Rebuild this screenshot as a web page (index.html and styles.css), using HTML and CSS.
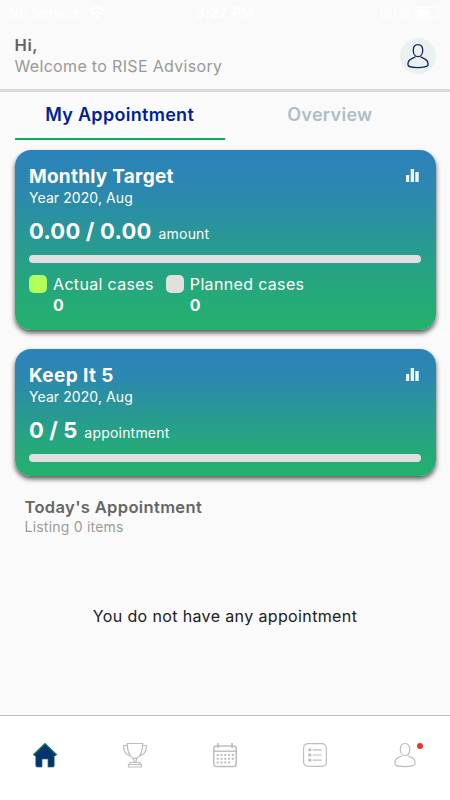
FILE: index.html
```html
<!DOCTYPE html>
<html lang="en">
<head>
<meta charset="utf-8">
<title>RISE Advisory</title>
<link rel="stylesheet" href="styles.css">
</head>
<body>
<div class="app">
  <div class="status">
    <div class="carrier"><span>No Service</span>
      <svg width="18" height="13" viewBox="0 0 18 13" fill="none" stroke="#fff" stroke-width="2.5"><path d="M1 5Q9-2 17 5M4 8.3Q9 4 14 8.3"/><path d="M6.5 10.2Q9 8 11.5 10.2L9 13Z" fill="#fff" stroke="none"/></svg>
    </div>
    <span class="clock">3:22 PM</span>
    <div class="battery"><span>60%</span>
      <svg width="27" height="12" viewBox="0 0 27 12"><rect x=".5" y=".5" width="23" height="11" rx="3" fill="none" stroke="#fff"/><rect x="2" y="2" width="13" height="8" rx="1.5" fill="#fff"/><path d="M25 4q2 2 0 4z" fill="#fff"/></svg>
    </div>
  </div>
  <header class="header">
    <div class="greeting">
      <div class="hi">Hi,</div>
      <div class="welcome">Welcome to RISE Advisory</div>
    </div>
    <div class="avatar">
      <svg width="24" height="26" viewBox="0 0 24 26" fill="none" stroke="#15205c" stroke-width="1.3"><path d="M12 1.7C8.6 1.7 7.3 4 7.3 7.4c0 3.800 2 6.300 4.700 6.300s4.700-2.500 4.700-6.300C16.700 4 15.400 1.700 12 1.700Z"/><path d="M9.500 13.600C8 15.500 2 15.500 2 20.500v1.500c0 1.500 5 2.600 10 2.600s10-1.100 10-2.600v-1.500c0-5-6-5-7.500-6.900"/></svg>
    </div>
  </header>
  <nav class="tabs">
    <div class="tab active">My Appointment</div>
    <div class="tab">Overview</div>
  </nav>
  <main class="main">
    <section class="card target">
      <div class="card-head"><h2>Monthly Target</h2>
        <svg width="13" height="13" viewBox="0 0 13 13" fill="#f2f6f8"><path d="M0 6h3.200v7H0zM4.700 0h3.300v13H4.700zM9.300 3h3.400v10H9.300z"/></svg>
      </div>
      <div class="period">Year 2020, Aug</div>
      <div class="amount"><strong class="money">0.00 / 0.00</strong><span class="unit-amount">amount</span></div>
      <div class="bar"></div>
      <div class="legend">
        <div class="item"><i class="swatch actual"></i><div><div class="label">Actual cases</div><b>0</b></div></div>
        <div class="item"><i class="swatch"></i><div><div class="label">Planned cases</div><b>0</b></div></div>
      </div>
    </section>
    <section class="card keep">
      <div class="card-head"><h2 class="keep-title">Keep It 5</h2>
        <svg width="13" height="13" viewBox="0 0 13 13" fill="#f2f6f8"><path d="M0 6h3.200v7H0zM4.700 0h3.300v13H4.700zM9.300 3h3.400v10H9.300z"/></svg>
      </div>
      <div class="period">Year 2020, Aug</div>
      <div class="amount"><strong class="count">0 / 5</strong><span class="unit-count">appointment</span></div>
      <div class="bar"></div>
    </section>
    <section class="today">
      <h3>Today's Appointment</h3>
      <div class="listing">Listing 0 items</div>
    </section>
    <p class="empty">You do not have any appointment</p>
  </main>
  <nav class="bottom">
    <div class="nav-item">
      <svg width="26" height="26" viewBox="0 0 26 26"><path d="M3.800 12v11.500q0 1.500 1.500 1.500H10v-8h6v8h4.700q1.500 0 1.500-1.500V12" fill="#05336b" stroke="#18768a" stroke-width=".7"/><path d="M13 1.300 1.300 12.500 2.800 14H23.200l1.500-1.500Z" fill="#05336b"/><path d="M1.200 13 13 1.500 24.800 13" fill="none" stroke="#078b53" stroke-width="1.200"/></svg>
    </div>
    <div class="nav-item">
      <svg width="26" height="26" viewBox="0 0 26 26" fill="none" stroke="#bdbdbd" stroke-width="1.200"><path d="M5.300 1.500h15.400C20.700 9 18.500 14 15 16.300h-4C7.500 14 5.300 9 5.300 1.500ZM5.400 3.500H1.500c0 6 2 9.500 7 10.300M20.600 3.500h3.900c0 6-2 9.500-7 10.300M11 16.300h4q-1.300 1.700-1 4.200h-2q.3-2.500-1-4.200ZM8 20.500h10v2H8zM6.500 22.500h13V25h-13z"/></svg>
    </div>
    <div class="nav-item">
      <svg width="26" height="26" viewBox="0 0 26 26" fill="none" stroke="#bdbdbd"><rect x="1.800" y="4" width="22.400" height="20.500" rx="2.500" stroke-width="1.500"/><path d="M2 9.200h22" stroke-width="1.400"/><path d="M6 1v5M20 1v5" stroke-width="1.600"/><path d="M4.700 13h18M4.700 16.700h18M4.700 20.500h14" stroke-width="2" stroke-dasharray="2 1.800"/></svg>
    </div>
    <div class="nav-item">
      <svg width="26" height="26" viewBox="0 0 26 26" fill="none" stroke="#bdbdbd"><rect x="1.600" y="1.600" width="22.800" height="22.800" rx="4.500" stroke-width="1.200"/><path d="M10.700 7.800h9M10.700 13h9M10.700 18.200h9" stroke-width="1.200"/><path d="M6.300 7.800h3M6.300 13h3M6.300 18.200h3" stroke-width="2.800"/></svg>
    </div>
    <div class="nav-item profile">
      <svg width="24" height="26" viewBox="0 0 24 26" fill="none" stroke="#bdbdbd" stroke-width="1.200"><path d="M12 1.500C8.600 1.500 7.300 4 7.300 7.400c0 3.800 2 6.100 4.700 6.100s4.700-2.300 4.700-6.100C16.700 4 15.400 1.500 12 1.500Z"/><path d="M8.500 14C6.500 15.600 2 15.300 2 20v2.300c0 1.300 5 2.300 10 2.300s10-1 10-2.300V20c0-4.700-4.500-4.400-6.500-6"/></svg>
      <i class="dot"></i>
    </div>
  </nav>
</div>
</body>
</html>
```

FILE: styles.css
```css
* { box-sizing: border-box; }
body { margin: 0; font-family: Inter, sans-serif; background: #fafafa; }
h2, h3, p { margin: 0; }
svg { display: block; flex: none; }
.app { width: 450px; height: 800px; display: flex; flex-direction: column; overflow: hidden; }
.status { height: 25px; padding: 0 8px; display: grid; grid-template-columns: 1fr auto 1fr; align-items: center; color: #fff; font-size: 14px; }
.carrier, .battery { display: flex; align-items: center; gap: 6px; letter-spacing: .1px; }
.battery { justify-content: flex-end; gap: 4px; letter-spacing: 0; }
.clock { font-weight: 600; letter-spacing: .3px; }
.header { height: 67px; padding: 10px 14px 0 14.500px; border-bottom: 3px solid #d9d9d9; display: flex; justify-content: space-between; align-items: flex-start; }
.hi { font-size: 16.500px; line-height: 21px; font-weight: 600; color: #626262; letter-spacing: .6px; }
.welcome { font-size: 16px; line-height: 20px; color: #999; letter-spacing: .33px; }
.avatar { width: 36px; height: 36px; margin-top: 3px; border-radius: 50%; background: #e9f2f0; display: flex; justify-content: center; align-items: center; }
.tabs { height: 48px; padding: 0 15px 0 14.500px; display: grid; grid-template-columns: 1fr 1fr; }
.tab { padding-top: 11px; text-align: center; font-size: 18px; line-height: 24.500px; font-weight: 600; letter-spacing: .3px; color: #adbec7; }
.tab.active { color: #001f98; border-bottom: 2px solid #0aad5b; }
.main { flex: 1; padding: 10px 14.500px 0; }
.card { padding: 14px 14.500px 0; border-radius: 16px; color: #fff; background: linear-gradient(#2c82b9, #2b88b0 22%, #289a91 53%, #25a87c 77%, #24b16c); box-shadow: 0 3px 5px rgba(0,0,0,.65); }
.target { height: 180px; }
.keep { height: 127px; margin-top: 19px; }
.card-head { height: 24px; display: flex; justify-content: space-between; align-items: center; padding-right: 2px; }
.card-head svg { margin-bottom: 1px; }
h2 { font-size: 19px; line-height: 25px; font-weight: 700; letter-spacing: .25px; }
.keep-title { letter-spacing: .4px; }
.period { font-size: 14px; line-height: 20px; letter-spacing: .08px; }
.amount { height: 47px; padding-top: 10px; display: flex; align-items: baseline; gap: 7px; font-size: 14px; letter-spacing: .2px; }
.amount strong { font-size: 22px; line-height: 26px; letter-spacing: .22px; }
.amount .count { letter-spacing: .1px; }
.bar { height: 8px; border-radius: 4px; background: #e0e0e0; }
.legend { display: flex; gap: 12px; padding-top: 11px; }
.item { display: flex; gap: 6px; font-size: 16px; line-height: 21px; letter-spacing: .34px; }
.item b { display: block; line-height: 20px; }
.swatch { width: 18px; height: 18px; margin-top: 1px; border-radius: 5px; background: #e0e0e0; }
.actual { background: #b2ff59; }
.today { padding: 21px 10px 0; }
h3 { font-size: 16.500px; line-height: 21px; font-weight: 600; letter-spacing: .36px; color: #666; }
.listing { font-size: 14px; line-height: 17px; letter-spacing: .22px; color: #9b9b9b; }
.empty { margin-top: 70px; text-align: center; font-size: 16px; line-height: 22px; letter-spacing: .37px; color: #202020; }
.bottom { height: 85px; border-top: 1px solid #bdbdbd; background: #fff; display: grid; grid-template-columns: repeat(5, 1fr); padding-top: 26px; }
.nav-item { display: flex; justify-content: center; position: relative; }
.dot { position: absolute; left: 57px; top: 1px; width: 6px; height: 6px; border-radius: 50%; background: #f23129; }
```
